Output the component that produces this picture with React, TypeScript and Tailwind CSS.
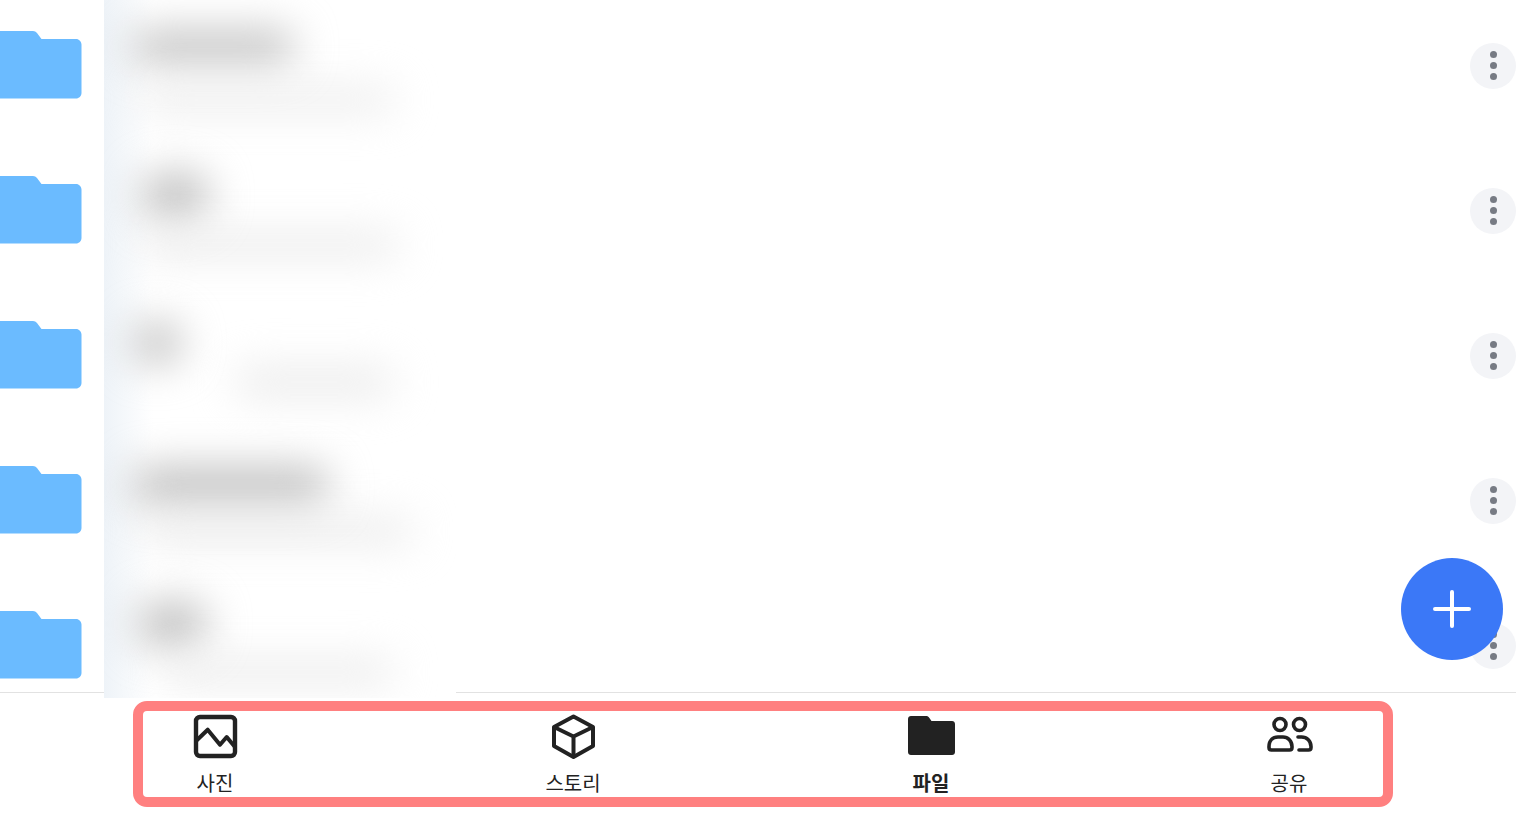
import React from 'react';

const rows = [
  { top: 'ml-[26px] mt-[37px] w-[165px] h-[34px]', sub: 'ml-[36px] mt-[24px] w-[255px] h-[24px]' },
  { top: 'ml-[36px] mt-[34px] w-[70px] h-[48px]', sub: 'ml-[40px] mt-[12px] w-[255px] h-[26px]' },
  { top: 'ml-[28px] mt-[38px] w-[50px] h-[44px]', sub: 'ml-[130px] mt-[2px] w-[160px] h-[30px]' },
  { top: 'ml-[26px] mt-[38px] w-[200px] h-[40px]', sub: 'ml-[40px] mt-[12px] w-[270px] h-[26px]' },
  { top: 'ml-[32px] mt-[28px] w-[72px] h-[46px]', sub: 'ml-[60px] mt-[12px] w-[230px] h-[26px]' },
];

const tabs = [
  { label: '사진', icon: <PhotoIcon /> },
  { label: '스토리', icon: <CubeIcon /> },
  { label: '파일', icon: <FolderIcon />, active: true },
  { label: '공유', icon: <PeopleIcon /> },
];

function PhotoIcon() {
  return (
    <svg width="48" height="48" viewBox="0 0 48 48" fill="none" stroke="#222" strokeWidth="4.4" strokeLinejoin="round" strokeLinecap="round">
      <rect x="5" y="5" width="39" height="39" rx="4" />
      <path d="M5 29l11.700-11.300L29 32.700 35.700 25 44 35" strokeWidth="4" />
    </svg>
  );
}

function CubeIcon() {
  return (
    <svg width="48" height="48" viewBox="0 0 48 48" fill="none" stroke="#222" strokeWidth="4" strokeLinejoin="round">
      <path d="M24.500 4.500L44 15v19L24.500 45 5 34V15z" />
      <path d="M5 15l19.500 9.500L44 15M24.500 24.500V45" />
    </svg>
  );
}

function FolderIcon() {
  return (
    <svg width="48" height="48" viewBox="0 0 48 48" fill="#222">
      <path d="M4 4h15c1.500 0 2.500.6 3.200 1.700L24.500 9H45c1.700 0 3 1.300 3 3v28c0 1.700-1.300 3-3 3H4c-1.700 0-3-1.300-3-3V7c0-1.700 1.300-3 3-3z" />
    </svg>
  );
}

function PeopleIcon() {
  return (
    <svg width="48" height="48" viewBox="0 0 48 48" fill="none" stroke="#222" strokeWidth="3.6" strokeLinecap="round">
      <circle cx="15" cy="12.500" r="6" />
      <circle cx="34.500" cy="12.500" r="6" />
      <path d="M6.500 38h18c1.500 0 2.500-1 2.500-2.500v-1c0-5.500-4-9.500-9-9.500h-5c-5.500 0-9 4-9 9.500v1c0 1.500 1 2.500 2.500 2.500z" />
      <path d="M33 25h3.500c5.500 0 9.500 4 9.500 9.500v1c0 1.500-1 2.500-2.500 2.500H34" />
    </svg>
  );
}

function FolderRow() {
  return (
    <div className="flex h-[145px] items-center justify-between">
      <svg width="82" height="68" viewBox="0 0 82 68" fill="#6bbbff" className="-mt-[1px]">
        <path d="M-4 0h37c1.500 0 3 .8 4 2l4.500 6H76c3 0 5.500 2.500 5.500 5.500V62c0 3-2.500 5.500-5.500 5.500H-4z" />
      </svg>
      <div className="flex h-[46px] w-[46px] items-center justify-center rounded-full bg-[#f3f4f7]">
        <div className="flex flex-col gap-[4px]">
          <span className="h-[7px] w-[7px] rounded-full bg-[#777b84]" />
          <span className="h-[7px] w-[7px] rounded-full bg-[#777b84]" />
          <span className="h-[7px] w-[7px] rounded-full bg-[#777b84]" />
        </div>
      </div>
    </div>
  );
}

export default function App() {
  return (
    <div className="relative h-[820px] w-[1516px] overflow-hidden bg-white font-['Noto_Sans_CJK_KR','Noto_Sans',sans-serif]">
      <div className="h-[693px] overflow-hidden border-b border-[#e2e2e2]">
        <div className="-mt-[7px]">
          {rows.map((_, i) => (
            <FolderRow key={i} />
          ))}
        </div>
      </div>

      {/* blurred out file names */}
      <div className="absolute left-[104px] top-0 h-[698px] w-[352px] overflow-hidden bg-gradient-to-r from-[#eef3f8] to-white to-[14%]">
        <div className="-mt-[7px]">
          {rows.map((r, i) => (
            <div key={i} className="flex h-[145px] flex-col items-start">
              <div className={`rounded-full bg-[#c2c2c2] blur-[20px] ${r.top}`} />
              <div className={`rounded-full bg-[#ebebeb] blur-[20px] ${r.sub}`} />
            </div>
          ))}
        </div>
      </div>

      <button className="absolute left-[1401px] top-[558px] flex h-[102px] w-[102px] items-center justify-center rounded-full bg-[#3b78f7]">
        <svg width="38" height="38" viewBox="0 0 38 38" stroke="#fff" strokeWidth="4" strokeLinecap="round">
          <path d="M19 2v34M2 19h34" />
        </svg>
      </button>

      <nav className="grid grid-cols-4 pl-[36px] pr-[48px] pt-[19px]">
        {tabs.map((t) => (
          <div key={t.label} className="flex flex-col items-center">
            {t.icon}
            <span className={`mt-[9px] text-[20px] leading-[28px] text-[#222] ${t.active ? 'font-bold' : ''}`}>{t.label}</span>
          </div>
        ))}
      </nav>

      {/* highlight annotation */}
      <div className="pointer-events-none absolute left-[133px] top-[701px] h-[106px] w-[1260px] rounded-[14px] border-[10px] border-[#ff8080]" />
    </div>
  );
}
